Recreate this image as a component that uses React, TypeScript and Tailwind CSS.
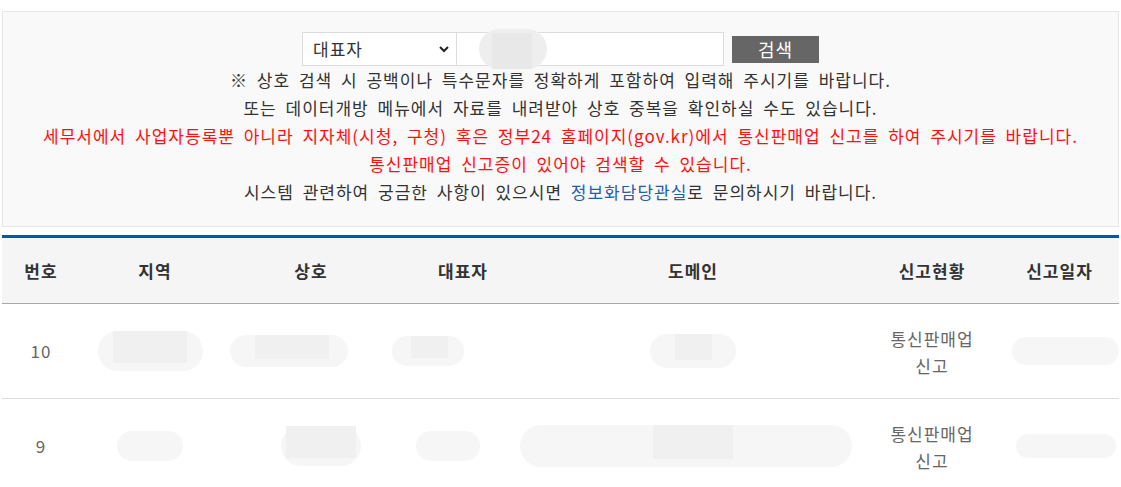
import React from "react";

const font = { fontFamily: '"Malgun Gothic", "Noto Sans CJK KR", "Noto Sans", sans-serif' };

function Blob({ w, h, core }: { w: number; h: number; core?: number }) {
  return (
    <div
      className="relative rounded-full bg-[#f6f6f6]"
      style={{ width: w, height: h }}
    >
      {core ? (
        <div
          className="absolute top-0 bottom-[8px] bg-[#f0f0f0]"
          style={{ left: (w - core) / 2, width: core }}
        />
      ) : null}
    </div>
  );
}

function Cell({ children, className = "" }: { children?: React.ReactNode; className?: string }) {
  return <div className={`flex items-center justify-center ${className}`}>{children}</div>;
}

export default function App() {
  const cols = "grid grid-cols-[78px_150px_162px_142px_318px_160px_107px]";
  return (
    <div
      className="bg-white w-[1121px] h-[487px] overflow-hidden pt-[11px] px-[2px] text-[17px] tracking-[1px] [word-spacing:4px]"
      style={font}
    >
      <div className="border border-[#e6e6e6] bg-[#f9f9f9] pt-[20px] pb-[20px] text-center leading-[28px] text-[#333]">
        <div className="flex items-center justify-center">
          <div className="flex items-center justify-between w-[155px] h-[34px] border border-[#dcdcdc] bg-white pl-[10px] pr-[5px] text-[#333]">
            <span>대표자</span>
            <svg width="14" height="14" viewBox="0 0 14 14">
              <path d="M3 5 L7 9 L11 5" fill="none" stroke="#222" strokeWidth="2" />
            </svg>
          </div>
          <div className="relative w-[268px] h-[34px] -ml-[1px] border border-[#dcdcdc] bg-white">
            <div className="absolute left-[22px] top-[-4px] w-[68px] h-[40px] rounded-full bg-[#eeeeee]" />
            <div className="absolute left-[35px] top-[0px] w-[40px] h-[36px] bg-[#e8e8e8]" />
          </div>
          <button className="ml-[8px] w-[87px] h-[27px] bg-[#666666] text-white text-[18px] leading-[27px]">
            검색
          </button>
        </div>
        <p>※ 상호 검색 시 공백이나 특수문자를 정확하게 포함하여 입력해 주시기를 바랍니다.</p>
        <p>또는 데이터개방 메뉴에서 자료를 내려받아 상호 중복을 확인하실 수도 있습니다.</p>
        <p className="text-[#ff1010]">
          세무서에서 사업자등록뿐 아니라 지자체(시청, 구청) 혹은 정부24 홈페이지(gov.kr)에서 통신판매업 신고를 하여 주시기를 바랍니다.
        </p>
        <p className="text-[#ff1010]">통신판매업 신고증이 있어야 검색할 수 있습니다.</p>
        <p>
          시스템 관련하여 궁금한 사항이 있으시면 <span className="text-[#1f5fb0]">정보화담당관실</span>로 문의하시기 바랍니다.
        </p>
      </div>

      <div className="mt-[8px] border-t-[3px] border-[#0059a9]">
        <div className={`${cols} h-[66px] bg-[#f5f5f5] border-b border-[#a8a8a8] font-bold text-[#333]`}>
          <Cell>번호</Cell>
          <Cell>지역</Cell>
          <Cell>상호</Cell>
          <Cell>대표자</Cell>
          <Cell>도메인</Cell>
          <Cell>신고현황</Cell>
          <Cell className="pr-[12px]">신고일자</Cell>
        </div>

        <div className={`${cols} h-[95px] border-b border-[#dddddd] text-[#666]`}>
          <Cell>10</Cell>
          <Cell className="pr-[10px]"><Blob w={105} h={40} core={74} /></Cell>
          <Cell className="pr-[44px]"><Blob w={123} h={32} core={74} /></Cell>
          <Cell className="pr-[70px]"><Blob w={75} h={30} core={37} /></Cell>
          <Cell><Blob w={86} h={34} core={37} /></Cell>
          <Cell className="leading-[27px] text-center pt-[2px]">
            <span>통신판매업<br />신고</span>
          </Cell>
          <Cell><Blob w={110} h={28} /></Cell>
        </div>

        <div className={`${cols} h-[95px] border-b border-[#dddddd] text-[#666]`}>
          <Cell>9</Cell>
          <Cell className="pr-[10px]"><Blob w={66} h={30} /></Cell>
          <Cell className="pl-[20px]"><Blob w={80} h={40} core={70} /></Cell>
          <Cell className="pr-[30px]"><Blob w={64} h={30} /></Cell>
          <Cell className="justify-start -ml-[14px]"><Blob w={345} h={42} core={80} /></Cell>
          <Cell className="leading-[27px] text-center pt-[2px]">
            <span>통신판매업<br />신고</span>
          </Cell>
          <Cell><Blob w={100} h={24} /></Cell>
        </div>
      </div>
    </div>
  );
}
